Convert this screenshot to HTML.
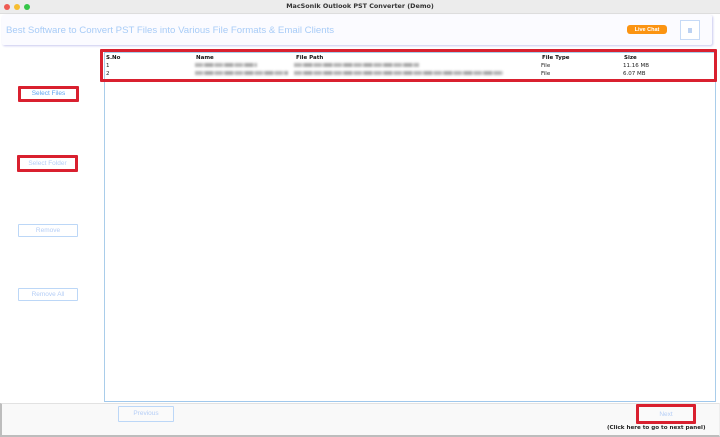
<!DOCTYPE html>
<html><head><meta charset="utf-8"><style>
html,body{margin:0;padding:0;width:720px;height:437px;overflow:hidden;background:#fff;font-family:"Liberation Sans",sans-serif}
#w{position:absolute;left:0;top:0;width:720px;height:437px;filter:blur(.3px);background:#fff}
.a{position:absolute;box-sizing:border-box}
.t{position:absolute;white-space:nowrap;line-height:10px}
.h{font:bold 5.5px/8px "DejaVu Sans",sans-serif;color:#111;position:absolute;white-space:nowrap}
.c{font:5.5px/8px "DejaVu Sans",sans-serif;color:#222;position:absolute;white-space:nowrap}
.btn{position:absolute;box-sizing:border-box;border:1.5px solid #bcd7f7;border-radius:1px;text-align:center;font-size:6.5px;color:#b5cef6;background:#fff}
.red{position:absolute;box-sizing:border-box;border:3px solid #d9202f;border-radius:1px}
.b{position:absolute;height:4px;filter:blur(1px);background:repeating-linear-gradient(90deg,#b5b5b5 0 7px,#d0d0d0 7px 10px,#a8a8a8 10px 18px,#d8d8d8 18px 20px)}
</style></head><body><div id="w">
<div class="a" style="left:0;top:0;width:720px;height:14px;background:#ececec;border-bottom:1px solid #ddd"></div>
<div class="a" style="left:4px;top:4px;width:6px;height:6px;border-radius:50%;background:#ee5a52"></div>
<div class="a" style="left:14px;top:4px;width:6px;height:6px;border-radius:50%;background:#f6bd2f"></div>
<div class="a" style="left:24px;top:4px;width:6px;height:6px;border-radius:50%;background:#35c649"></div>
<div class="t" style="left:0;width:720px;top:1px;text-align:center;font:bold 6.4px/10px 'DejaVu Sans',sans-serif;color:#333">MacSonik Outlook PST Converter (Demo)</div>

<div class="a" style="left:2px;top:15px;width:710px;height:30px;background:#fbfbff;border-radius:2px;box-shadow:1px 1px 2px #c9c9ee"></div>
<div class="t" style="left:6px;top:24px;font-size:9.65px;line-height:13px;color:#a8ccf7">Best Software to Convert PST Files into Various File Formats &amp; Email Clients</div>
<div class="a" style="left:627px;top:25px;width:40px;height:9px;border-radius:3px;background:#fb9412;color:#fff;font:bold 5.5px/10px 'Liberation Sans',sans-serif;text-align:center">Live Chat</div>
<div class="a" style="left:680px;top:20px;width:20px;height:20px;border:1px solid #c6daf6;background:#fff"></div>
<div class="a" style="left:688px;top:28px;width:4px;height:5px;background:#bcd2f2"></div>

<div class="a" style="left:104px;top:52px;width:612px;height:350px;border:1px solid #a9cdea;border-bottom:1.5px solid #a0c8ec;background:#fff"></div>

<div class="h" style="left:106px;top:54px">S.No</div>
<div class="h" style="left:196px;top:54px">Name</div>
<div class="h" style="left:296px;top:54px">File Path</div>
<div class="h" style="left:542px;top:54px">File Type</div>
<div class="h" style="left:624px;top:54px">Size</div>
<div class="c" style="left:106px;top:62px">1</div>
<div class="c" style="left:106px;top:70px">2</div>
<div class="b" style="left:195px;top:63px;width:62px"></div>
<div class="b" style="left:195px;top:71px;width:93px"></div>
<div class="b" style="left:294px;top:63px;width:125px"></div>
<div class="b" style="left:294px;top:71px;width:209px"></div>
<div class="c" style="left:541px;top:62px">File</div>
<div class="c" style="left:541px;top:70px">File</div>
<div class="c" style="left:623px;top:62px">11.16 MB</div>
<div class="c" style="left:623px;top:70px">6.07 MB</div>
<div class="red" style="left:100px;top:49px;width:617px;height:33px"></div>

<div class="btn" style="left:20px;top:88px;width:57px;height:13px;line-height:12px;color:#5fa6f0;border:0">Select Files</div>
<div class="red" style="left:18px;top:86px;width:61px;height:16px"></div>
<div class="btn" style="left:19px;top:157px;width:57px;height:12px;line-height:13px;border:0">Select Folder</div>
<div class="red" style="left:17px;top:155px;width:61px;height:17px"></div>
<div class="btn" style="left:18px;top:224px;width:60px;height:13px;line-height:11px">Remove</div>
<div class="btn" style="left:18px;top:288px;width:60px;height:13px;line-height:12px">Remove All</div>

<div class="a" style="left:0;top:403px;width:720px;height:34px;background:#f9f9f9;border-left:2px solid #bdbdbd;border-bottom:2px solid #bdbdbd;border-top:1px solid #e2e2e2;border-right:1px solid #eee"></div>
<div class="btn" style="left:118px;top:406px;width:56px;height:16px;line-height:14px;background:#fafafa">Previous</div>
<div class="btn" style="left:638px;top:406px;width:56px;height:16px;line-height:17px;border:0;background:#fafafa">Next</div>
<div class="red" style="left:636px;top:404px;width:60px;height:20px"></div>
<div class="t" style="left:607px;top:424px;font:bold 5.6px/9px 'DejaVu Sans',sans-serif;color:#222">(Click here to go to next panel)</div>
</div></body></html>
